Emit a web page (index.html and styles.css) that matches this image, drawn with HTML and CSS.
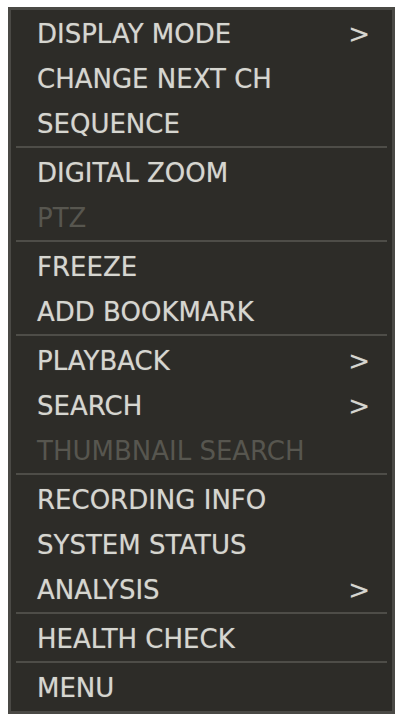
FILE: index.html
```html
<!DOCTYPE html>
<html>
<head>
<meta charset="utf-8">
<link rel="stylesheet" href="styles.css">
</head>
<body>
<div class="menu">
  <div class="item"><span>DISPLAY MODE</span><span class="arrow">&gt;</span></div>
  <div class="item"><span>CHANGE NEXT CH</span></div>
  <div class="item"><span>SEQUENCE</span></div>
  <div class="sep"></div>
  <div class="item"><span>DIGITAL ZOOM</span></div>
  <div class="item disabled"><span>PTZ</span></div>
  <div class="sep"></div>
  <div class="item"><span>FREEZE</span></div>
  <div class="item"><span>ADD BOOKMARK</span></div>
  <div class="sep"></div>
  <div class="item"><span>PLAYBACK</span><span class="arrow">&gt;</span></div>
  <div class="item"><span>SEARCH</span><span class="arrow">&gt;</span></div>
  <div class="item disabled"><span>THUMBNAIL SEARCH</span></div>
  <div class="sep"></div>
  <div class="item"><span>RECORDING INFO</span></div>
  <div class="item"><span>SYSTEM STATUS</span></div>
  <div class="item"><span>ANALYSIS</span><span class="arrow">&gt;</span></div>
  <div class="sep"></div>
  <div class="item"><span>HEALTH CHECK</span></div>
  <div class="sep"></div>
  <div class="item"><span>MENU</span></div>
</div>
</body>
</html>
```

FILE: styles.css
```css
html, body {
  margin: 0;
  padding: 0;
  background: #ffffff;
}

body {
  padding: 7px 0 0 8px;
}

.menu {
  box-sizing: border-box;
  width: 387px;
  height: 707px;
  background: #2d2c28;
  border: 3px solid #4a4945;
  padding-top: 1px;
  display: flex;
  flex-direction: column;
  font-family: "DejaVu Sans", Verdana, sans-serif;
  font-size: 26px;
  color: #d6d6d0;
}

.item {
  height: 45px;
  display: flex;
  align-items: center;
  justify-content: space-between;
  padding: 0 22px 0 26px;
  white-space: nowrap;
  text-shadow: 0 0 1px rgba(214, 214, 208, 0.5);
}

.item.disabled {
  color: #57564f;
  text-shadow: none;
}

.arrow {
  font-size: 26px;
}

.sep {
  height: 2px;
  margin: 0 5px 2px 5px;
  background: #4e4d48;
}
```
